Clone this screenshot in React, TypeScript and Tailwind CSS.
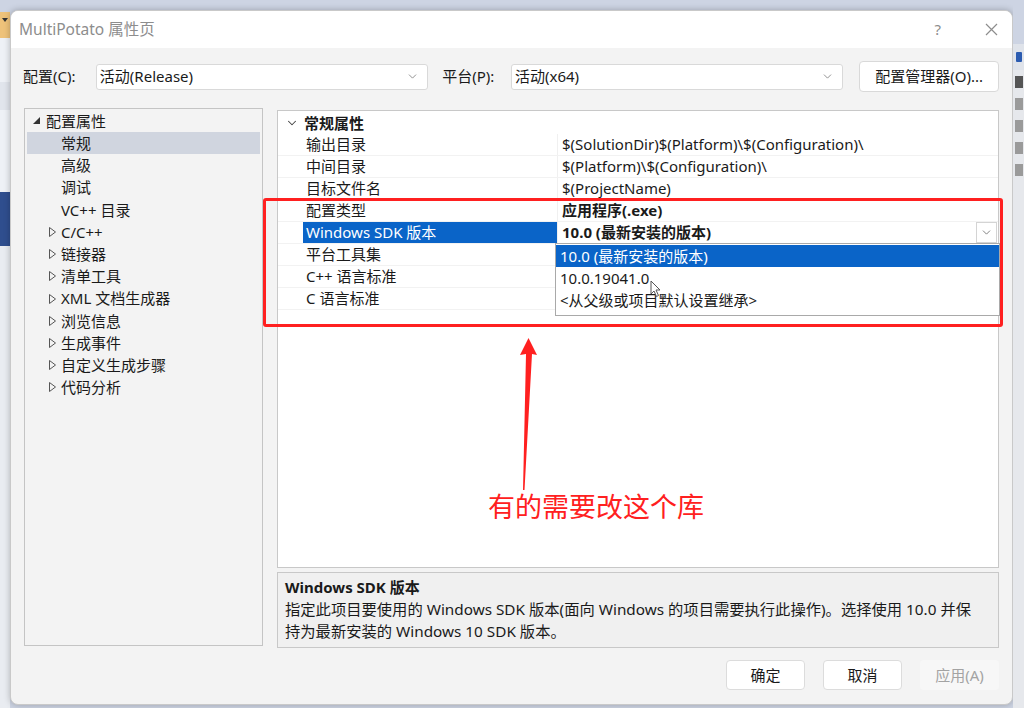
import { ChevronDown } from "lucide-react";

const font = { fontFamily: '"Noto Sans", "Noto Sans CJK SC", sans-serif' };

const tree = [
  { label: "配置属性", kind: "open" },
  { label: "常规", kind: "leaf", selected: true },
  { label: "高级", kind: "leaf" },
  { label: "调试", kind: "leaf" },
  { label: "VC++ 目录", kind: "leaf" },
  { label: "C/C++", kind: "closed" },
  { label: "链接器", kind: "closed" },
  { label: "清单工具", kind: "closed" },
  { label: "XML 文档生成器", kind: "closed" },
  { label: "浏览信息", kind: "closed" },
  { label: "生成事件", kind: "closed" },
  { label: "自定义生成步骤", kind: "closed" },
  { label: "代码分析", kind: "closed" },
];

const props = [
  { name: "输出目录", value: "$(SolutionDir)$(Platform)\\$(Configuration)\\" },
  { name: "中间目录", value: "$(Platform)\\$(Configuration)\\" },
  { name: "目标文件名", value: "$(ProjectName)" },
  { name: "配置类型", value: "应用程序(.exe)", bold: true },
  { name: "Windows SDK 版本", value: "10.0 (最新安装的版本)", bold: true, selected: true },
  { name: "平台工具集", value: "" },
  { name: "C++ 语言标准", value: "" },
  { name: "C 语言标准", value: "" },
];

function Combo({ text, width }: { text: string; width: string }) {
  return (
    <div className={`${width} h-[26px] bg-white border border-[#d9d9d9] rounded-[3px] flex items-center justify-between pl-[3px] pr-[8px] text-[15px] text-[#1a1a1a]`}>
      <span>{text}</span>
      <ChevronDown size={13} strokeWidth={1.5} className="text-[#7a7a7a]" />
    </div>
  );
}

function TreeGlyph({ kind }: { kind: string }) {
  if (kind === "open") {
    return (
      <svg width="8" height="8" viewBox="0 0 8 8" className="mr-[5px]">
        <polygon points="7,0 7,7 0,7" fill="#333" />
      </svg>
    );
  }
  if (kind === "closed") {
    return (
      <svg width="7" height="10" viewBox="0 0 7 10" className="mr-[5px]">
        <polygon points="0.5,0.5 6.5,5 0.5,9.5" fill="none" stroke="#555" strokeWidth="1" />
      </svg>
    );
  }
  return null;
}

export default function App() {
  return (
    <div className="w-[1024px] h-[708px] relative overflow-hidden bg-[#cdd4e3] flex" style={font}>
      {/* screen behind the dialog */}
      <div className="w-[10px] flex flex-col shrink-0">
        <div className="h-[12px] bg-[#cdd4e3]" />
        <div className="h-[26px] bg-[#eec27a] flex items-start justify-center pt-[6px]">
          <div className="w-0 h-0 border-l-[3px] border-r-[3px] border-t-[4px] border-l-transparent border-r-transparent border-t-[#333]" />
        </div>
        <div className="h-[44px] bg-[#eef1f6]" />
        <div className="h-[28px] bg-[#e1e5ec]" />
        <div className="h-[82px] bg-[#eef1f6]" />
        <div className="h-[54px] bg-[#2f4e8e]" />
        <div className="flex-1 bg-[#e9ecf1]" />
      </div>

      <div className="w-[1003px] mt-[10px] h-[695px] bg-[#f3f3f3] rounded-[8px] border border-[#c9c9c9] shadow-[0_0_6px_rgba(0,0,0,0.25)] flex flex-col shrink-0 overflow-hidden">
        <div className="h-[37px] bg-white flex items-center justify-between pl-[8px] pr-[14px]">
          <span className="text-[15.5px] text-[#8d8d8d]">MultiPotato 属性页</span>
          <div className="flex items-center gap-[44px] text-[#8d8d8d]">
            <span className="text-[15px]">?</span>
            <svg width="13" height="13" viewBox="0 0 13 13">
              <path d="M1 1L12 12M12 1L1 12" stroke="#8d8d8d" strokeWidth="1.2" />
            </svg>
          </div>
        </div>

        <div className="flex items-center pl-[12px] pr-[13px] mt-[13px] h-[31px] text-[15px] text-[#1a1a1a]">
          <span className="w-[73px]">配置(C):</span>
          <Combo text="活动(Release)" width="w-[333px]" />
          <span className="ml-[14px] w-[69px]">平台(P):</span>
          <Combo text="活动(x64)" width="w-[333px]" />
          <div className="ml-[16px] w-[140px] h-[31px] bg-white border border-[#d9d9d9] rounded-[4px] flex items-center justify-center">
            配置管理器(O)...
          </div>
        </div>

        <div className="flex mt-[16px] pl-[13px] pr-[13px] gap-[14px] h-[540px]">
          <div className="w-[239px] h-[538px] border border-[#c4c4c4] bg-[#f3f3f3] pt-[1px] px-[2px] text-[15px] text-[#1a1a1a]">
            {tree.map((t) => (
              <div
                key={t.label}
                className={`h-[22.2px] flex items-center ${t.selected ? "bg-[#d0d5df]" : ""} ${
                  t.kind === "open" ? "pl-[6px]" : t.kind === "closed" ? "pl-[22px]" : "pl-[34px]"
                }`}
              >
                <TreeGlyph kind={t.kind} />
                <span>{t.label}</span>
              </div>
            ))}
          </div>

          <div className="flex-1 flex flex-col gap-[4px] pt-[2px]">
            <div className="h-[458px] bg-white border border-[#c8c8c8] pt-[1px] text-[15px] text-[#1a1a1a]">
              <div className="h-[22px] flex items-center">
                <div className="w-[26px] flex justify-center pl-[2px]">
                  <ChevronDown size={14} strokeWidth={1.8} className="text-[#444]" />
                </div>
                <span className="font-bold">常规属性</span>
              </div>
              {props.map((p) => (
                <div key={p.name} className="h-[22px] flex border-b border-[#f2f2f2]">
                  <div className="w-[25px]" />
                  <div
                    className={`w-[254px] flex items-center pl-[3px] ${
                      p.selected ? "bg-[#0a64c8] text-white" : ""
                    }`}
                  >
                    {p.name}
                  </div>
                  <div className="flex-1 flex items-center justify-between pl-[4px] pr-[1px] border-l border-[#f0f0f0]">
                    <span className={p.bold ? "font-bold" : ""}>{p.value}</span>
                    {p.selected && (
                      <div className="w-[21px] h-[21px] bg-white border border-[#d4d4d4] flex items-center justify-center">
                        <ChevronDown size={13} strokeWidth={1.5} className="text-[#666]" />
                      </div>
                    )}
                  </div>
                </div>
              ))}
            </div>

            <div className="h-[76px] bg-[#f0f0f0] border border-[#c8c8c8] px-[7px] pt-[3px] text-[#1a1a1a]">
              <div className="text-[15px] font-bold leading-[22px]">Windows SDK 版本</div>
              <div className="text-[15.3px] leading-[22px] whitespace-nowrap">
                指定此项目要使用的 Windows SDK 版本(面向 Windows 的项目需要执行此操作)。选择使用 10.0 并保
                <br />
                持为最新安装的 Windows 10 SDK 版本。
              </div>
            </div>
          </div>
        </div>

        <div className="flex justify-end gap-[18px] pr-[13px] mt-[12px] text-[15px]">
          <div className="w-[79px] h-[30px] bg-white border border-[#dcdcdc] rounded-[4px] flex items-center justify-center text-[#1a1a1a]">
            确定
          </div>
          <div className="w-[79px] h-[30px] bg-white border border-[#dcdcdc] rounded-[4px] flex items-center justify-center text-[#1a1a1a]">
            取消
          </div>
          <div className="w-[79px] h-[30px] bg-[#f7f7f7] rounded-[4px] flex items-center justify-center text-[#a3a3a3]">
            应用(A)
          </div>
        </div>
      </div>

      <div className="w-[11px] flex flex-col shrink-0">
        <div className="h-[44px] bg-[#cdd4e3]" />
        <div className="h-[26px] bg-[#dfe3ea] flex items-center pl-[3px]">
          <div className="w-[6px] h-[10px] bg-[#2b5bb0] rounded-[1px]" />
        </div>
        <div className="flex-1 bg-[#e6e8ec] flex flex-col gap-[10px] pt-[6px] pl-[2px]">
          <div className="w-[8px] h-[12px] bg-[#555]" />
          <div className="w-[8px] h-[12px] bg-[#9a9a9a]" />
          <div className="w-[8px] h-[12px] bg-[#9a9a9a]" />
          <div className="w-[8px] h-[12px] bg-[#9a9a9a]" />
          <div className="w-[8px] h-[12px] bg-[#9a9a9a]" />
        </div>
      </div>

      {/* open dropdown list */}
      <div className="absolute left-[555px] top-[243px] w-[445px] h-[73px] bg-white border border-[#a9a9a9] text-[15px] text-[#1a1a1a] pt-[1px]">
        <div className="h-[22px] bg-[#0a64c8] text-white flex items-center pl-[4px]">10.0 (最新安装的版本)</div>
        <div className="h-[22px] flex items-center pl-[4px]">10.0.19041.0</div>
        <div className="h-[22px] flex items-center pl-[4px]">&lt;从父级或项目默认设置继承&gt;</div>
      </div>

      {/* mouse pointer */}
      <svg className="absolute left-[650px] top-[280px]" width="12" height="18" viewBox="0 0 12 18">
        <path d="M1 1V14L4 11L6.5 16.5L8.5 15.5L6 10H10Z" fill="white" stroke="#555" strokeWidth="1" />
      </svg>

      {/* annotation */}
      <div className="absolute left-[263px] top-[198px] w-[740px] h-[129px] border-[3px] border-[#ff2020] rounded-[3px]" />
      <svg className="absolute left-[510px] top-[335px]" width="40" height="160" viewBox="0 0 40 160">
        <polygon points="18.5,3 27,20 22,19 14.5,155 13,155 16,19 10,20" fill="#ff2020" />
      </svg>
      <div className="absolute left-[488px] top-[489px] text-[27px] leading-[34px] text-[#ff2020]" style={{ fontFamily: '"Noto Sans CJK SC", sans-serif' }}>
        有的需要改这个库
      </div>
    </div>
  );
}
